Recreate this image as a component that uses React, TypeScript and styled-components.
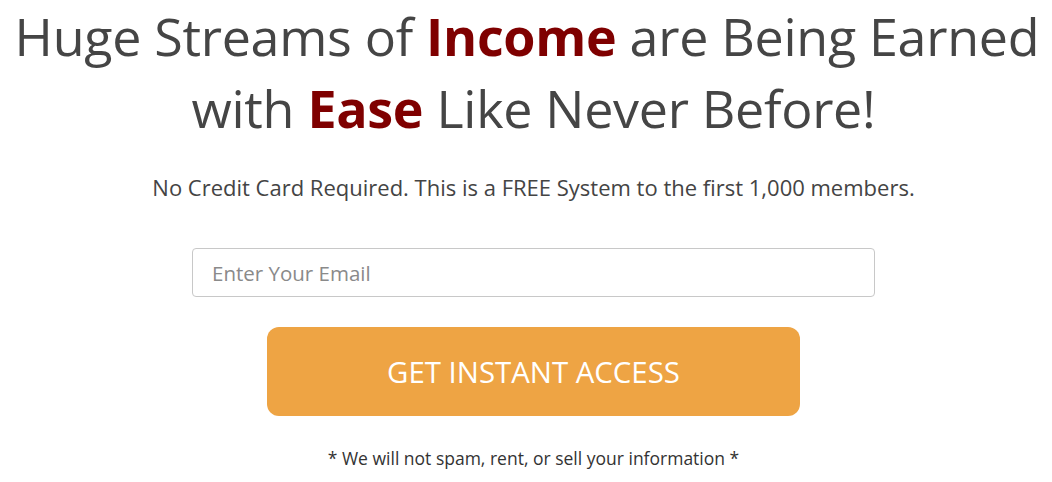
import React from "react";
import styled, { createGlobalStyle } from "styled-components";

const Global = createGlobalStyle`
  html, body { margin: 0; padding: 0; background: #ffffff; }
  body { font-family: "Open Sans", "Noto Sans", sans-serif; }
  * { box-sizing: border-box; }
`;

const Page = styled.main`
  width: 1052px;
  padding-left: 15px;
  display: flex;
  flex-direction: column;
  align-items: center;
`;

const Headline = styled.h1`
  margin: 0;
  font-size: 52px;
  line-height: 72px;
  font-weight: 400;
  color: #454545;
  text-align: center;
  letter-spacing: -0.3px;
  white-space: nowrap;
`;

const Accent = styled.strong`
  font-weight: 700;
  color: #7f0000;
`;

const Sub = styled.p`
  margin: 28px 0 0;
  font-size: 22px;
  line-height: 30px;
  color: #444444;
  text-align: center;
`;

const Form = styled.form`
  margin-top: 46px;
  display: flex;
  flex-direction: column;
  align-items: center;
`;

const EmailInput = styled.input`
  width: 683px;
  height: 49px;
  border: 1px solid #c8c8c8;
  border-radius: 4px;
  padding: 0 19px;
  font-family: "Open Sans", sans-serif;
  font-size: 20.5px;
  color: #555;
  outline: none;
  &::placeholder { color: #8a8a8a; }
`;

const Cta = styled.button`
  margin-top: 30px;
  width: 533px;
  height: 89px;
  border: none;
  border-radius: 12px;
  background: #eea444;
  color: #ffffff;
  font-family: "Open Sans", sans-serif;
  font-size: 29.4px;
  font-weight: 400;
  cursor: pointer;
`;

const Note = styled.p`
  margin: 30px 0 0;
  font-size: 17.5px;
  line-height: 24px;
  color: #333333;
  text-align: center;
`;

export default function App() {
  return (
    <>
      <Global />
      <Page>
        <Headline>
          Huge Streams of <Accent>Income</Accent> are Being Earned{"\u00a0"}
          <br />
          with <Accent>Ease</Accent> Like Never Before!
        </Headline>
        <Sub>No Credit Card Required. This is a FREE System to the first 1,000 members.</Sub>
        <Form onSubmit={(e) => e.preventDefault()}>
          <EmailInput type="email" placeholder="Enter Your Email" />
          <Cta type="submit">GET INSTANT ACCESS</Cta>
        </Form>
        <Note>* We will not spam, rent, or sell your information *</Note>
      </Page>
    </>
  );
}
